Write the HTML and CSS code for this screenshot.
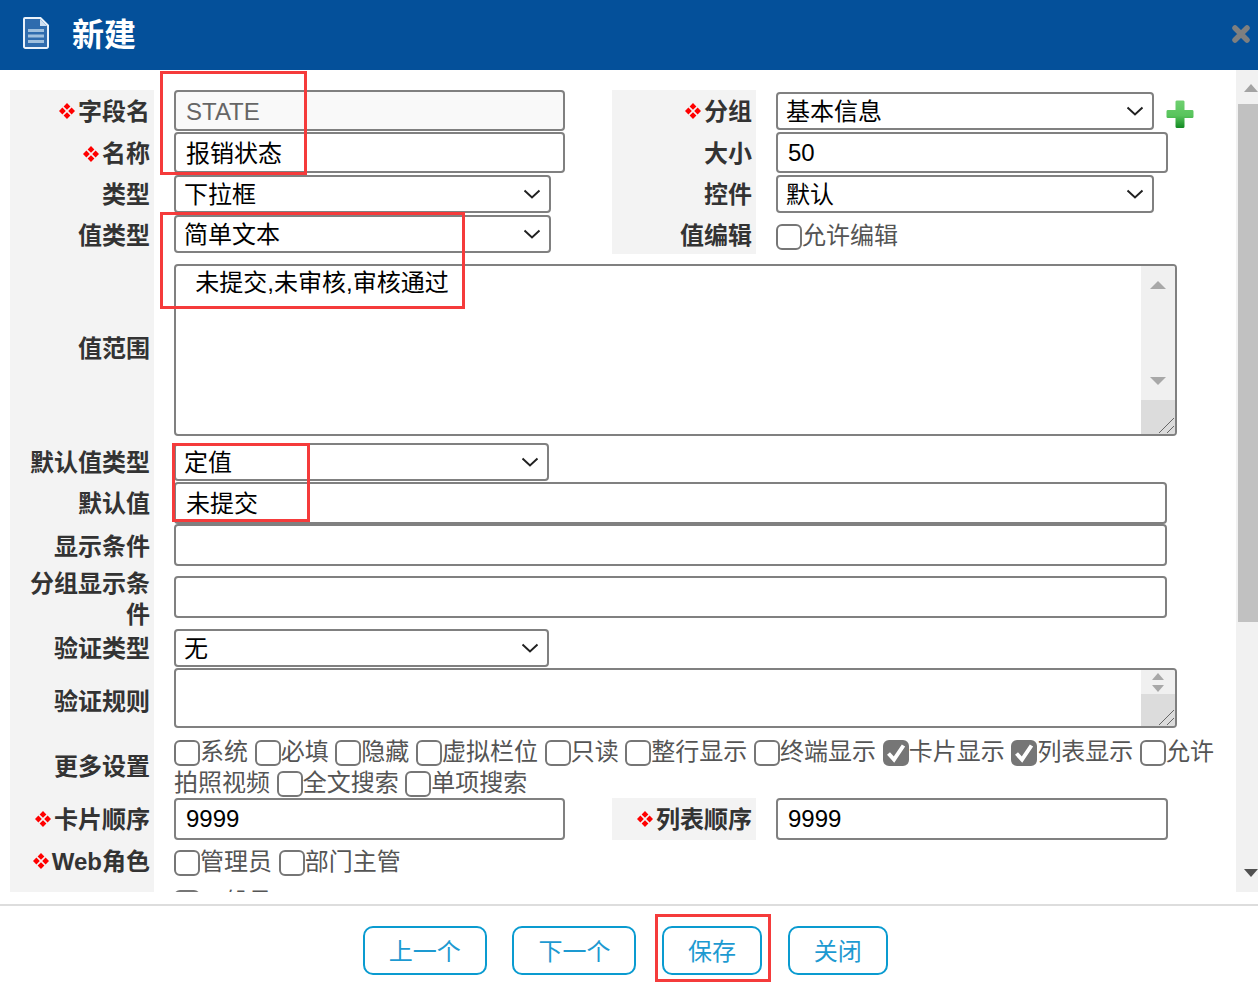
FILE: index.html
```html
<!DOCTYPE html>
<html lang="zh">
<head>
<meta charset="utf-8">
<title>新建</title>
<link rel="stylesheet" href="styles.css">
</head>
<body>
<svg class="defs" aria-hidden="true"><symbol id="dm" viewBox="0 0 16 16"><path d="M8 0l3.400 3.400L8 6.800 4.600 3.400zM8 9.200l3.400 3.400L8 16l-3.400-3.400zM3.400 4.600L6.800 8l-3.400 3.400L0 8zM12.600 4.600L16 8l-3.400 3.400L9.200 8z" fill="#f00"/></symbol></svg>
<div class="dialog">
  <header class="head">
    <svg class="doc-icon" viewBox="0 0 26 32" width="26" height="32"><path d="M2 1h15.500L25 8.500V29.500a1.500 1.500 0 0 1-1.500 1.500H2.500A1.500 1.500 0 0 1 1 29.500V2a1 1 0 0 1 1-1z" fill="#2f6cae" stroke="#eaf2fa" stroke-width="2"/><path d="M17 2l7 7h-7z" fill="#cfe0f0"/><path d="M5 13.500h16M5 19h16M5 24.500h16" stroke="#9fc0de" stroke-width="3"/></svg>
    <h1 class="title">新建</h1>
    <svg class="close-icon" viewBox="0 0 18 18" width="18" height="18"><path d="M3 3l12 12M15 3L3 15" stroke="#7f7f7f" stroke-width="5.500" stroke-linecap="round"/></svg>
  </header>
  <div class="body">
    <form class="form">
      <label class="lab"><svg class="req"><use href="#dm"/></svg>字段名</label>
      <div class="cell"><input class="field w391 readonly" value="STATE" readonly></div>
      <label class="lab"><svg class="req"><use href="#dm"/></svg>分组</label>
      <div class="cell group-cell"><select class="sel w378 mt2"><option>基本信息</option></select>
        <svg class="plus" viewBox="0 0 28 28" width="28" height="28"><defs><linearGradient id="pg" x1="0" y1="0" x2="0" y2="1"><stop offset="0" stop-color="#6fd070"/><stop offset=".55" stop-color="#58c45c"/><stop offset="1" stop-color="#128a22"/></linearGradient></defs><path d="M9.500 1.500a1.500 1.500 0 0 1 1.500-1h6a1.500 1.500 0 0 1 1.500 1V10h8a1.500 1.500 0 0 1 1 1.500v5a1.500 1.500 0 0 1-1 1.500h-8v8.500a1.500 1.500 0 0 1-1.500 1.500h-6a1.500 1.500 0 0 1-1.500-1.500V18h-8a1.500 1.500 0 0 1-1-1.500v-5a1.500 1.500 0 0 1 1-1.500h8z" fill="url(#pg)"/></svg></div>

      <label class="lab"><svg class="req"><use href="#dm"/></svg>名称</label>
      <div class="cell"><input class="field w391 h41 cjk" value="报销状态"></div>
      <label class="lab">大小</label>
      <div class="cell"><input class="field w392 h41" value="50"></div>

      <label class="lab">类型</label>
      <div class="cell"><select class="sel w377"><option>下拉框</option></select></div>
      <label class="lab">控件</label>
      <div class="cell"><select class="sel w378"><option>默认</option></select></div>

      <label class="lab lab-low">值类型</label>
      <div class="cell"><select class="sel w377 mt1"><option>简单文本</option></select></div>
      <label class="lab lab-low">值编辑</label>
      <div class="cell checks pt6"><label><input type="checkbox" class="chk">允许编辑</label></div>

      <label class="lab">值范围</label>
      <div class="cell wide">
        <div class="area area-tall mt10">
          <textarea class="area-text">  未提交,未审核,审核通过</textarea>
          <div class="sb">
            <div class="sb-track"><span class="tri up"></span><span class="tri down"></span></div>
            <div class="sb-corner"><svg viewBox="0 0 16 16" width="16" height="16"><path d="M1 16L16 1M9 16l7-7" stroke="#666" stroke-width="1"/></svg></div>
          </div>
        </div>
      </div>

      <label class="lab">默认值类型</label>
      <div class="cell wide"><select class="sel w375"><option>定值</option></select></div>

      <label class="lab">默认值</label>
      <div class="cell wide"><input class="field w993 cjk" value="未提交"></div>

      <label class="lab">显示条件</label>
      <div class="cell wide"><input class="field w993"></div>

      <label class="lab">分组显示条件</label>
      <div class="cell wide"><input class="field w993 mt8"></div>

      <label class="lab">验证类型</label>
      <div class="cell wide"><select class="sel w375"><option>无</option></select></div>

      <label class="lab">验证规则</label>
      <div class="cell wide">
        <div class="area area-short">
          <textarea class="area-text"></textarea>
          <div class="sb">
            <div class="sb-track small"><span class="tri up small"></span><span class="tri down small"></span></div>
            <div class="sb-corner tall"><svg viewBox="0 0 16 16" width="16" height="16"><path d="M1 16L16 1M9 16l7-7" stroke="#666" stroke-width="1"/></svg></div>
          </div>
        </div>
      </div>

      <label class="lab">更多设置</label>
      <div class="cell wide checks wrap-checks">
        <label><input type="checkbox" class="chk">系统</label>
        <label><input type="checkbox" class="chk">必填</label>
        <label><input type="checkbox" class="chk">隐藏</label>
        <label><input type="checkbox" class="chk">虚拟栏位</label>
        <label><input type="checkbox" class="chk">只读</label>
        <label><input type="checkbox" class="chk">整行显示</label>
        <label><input type="checkbox" class="chk">终端显示</label>
        <label><input type="checkbox" class="chk" checked>卡片显示</label>
        <label><input type="checkbox" class="chk" checked>列表显示</label>
        <label><input type="checkbox" class="chk">允许拍照视频</label>
        <label><input type="checkbox" class="chk">全文搜索</label>
        <label><input type="checkbox" class="chk">单项搜索</label>
      </div>

      <label class="lab"><svg class="req"><use href="#dm"/></svg>卡片顺序</label>
      <div class="cell"><input class="field w391" value="9999"></div>
      <label class="lab"><svg class="req"><use href="#dm"/></svg>列表顺序</label>
      <div class="cell"><input class="field w392" value="9999"></div>

      <label class="lab"><svg class="req"><use href="#dm"/></svg>Web角色</label>
      <div class="cell wide checks pt6">
        <label><input type="checkbox" class="chk">管理员</label>
        <label><input type="checkbox" class="chk">部门主管</label>
      </div>

      <label class="lab">终端角色</label>
      <div class="cell wide checks pt4">
        <label><input type="checkbox" class="chk">一般员工</label>
      </div>
    </form>
    <div class="page-sb">
      <span class="tri up page-up"></span>
      <div class="page-thumb"></div>
      <span class="tri down page-down"></span>
    </div>
  </div>
  <footer class="foot">
    <button type="button" class="btn btn-wide">上一个</button>
    <button type="button" class="btn btn-wide">下一个</button>
    <button type="button" class="btn">保存</button>
    <button type="button" class="btn">关闭</button>
  </footer>
  <div class="mark mark-a"></div>
  <div class="mark mark-b"></div>
  <div class="mark mark-c"></div>
  <div class="mark mark-d"></div>
</div>
</body>
</html>
```
FILE: styles.css
```css
* { box-sizing: border-box; }
html, body { margin: 0; height: 100%; overflow: hidden; background: #fff; }
body, input, select, textarea, button {
  font-family: "Liberation Sans", "Noto Sans CJK SC", sans-serif;
  font-size: 24px;
}
.defs { display: none; }
.dialog { position: relative; width: 1258px; height: 982px; display: flex; flex-direction: column; overflow: hidden; }

.head { flex: none; height: 70px; background: #04509a; display: flex; align-items: center; padding-left: 23px; padding-right: 8px; }
.doc-icon { flex: none; margin-top: -4px; }
.title { margin: 0 0 0 23px; font-size: 32px; line-height: 40px; font-weight: 700; color: #fff; flex: 1; }
.close-icon { flex: none; margin-top: -2px; }

.body { flex: none; height: 822px; display: flex; overflow: hidden; }
.form {
  flex: none; width: 1236px; padding: 20px 0 0 10px;
  display: grid;
  grid-template-columns: 144px 458px 144px 1fr;
  grid-template-rows: 42px 43px 39px 40px 189px 39px 42px 44px 61px 39px 67px 63px 42px 42px 44px;
  overflow: hidden;
}
.lab {
  display: flex; align-items: center; justify-content: flex-end; flex-wrap: wrap;
  align-content: center;
  padding-right: 4px; background: #f3f3f3; color: #333; font-weight: 700; line-height: 31px; text-align: right;
}
.lab-low { padding-top: 2px; }
.req { flex: none; width: 16px; height: 16px; margin-right: 3px; }
.cell { padding-left: 20px; min-width: 0; }
.wide { grid-column: 2 / -1; }
.group-cell { display: flex; align-items: flex-start; }
.pt4 { padding-top: 4px; }
.pt6 { padding-top: 6px; }

.field {
  display: block; height: 42px; padding: 0 10px; margin: 0; border: 2px solid #808080; border-radius: 4px; background: #fff; color: #000; outline: none;
}
.h41 { height: 41px; }
.cjk { padding-bottom: 3px; }
.readonly { background: #f9f9f9; color: #666; height: 41px; padding-top: 2px; }
.sel {
  display: block; height: 38px; margin: 0; border: 2px solid #808080; border-radius: 4px; color: #000; padding: 0 40px 0 8px;
  appearance: none; -webkit-appearance: none;
  background: #fff url("data:image/svg+xml,%3Csvg xmlns='http://www.w3.org/2000/svg' width='18' height='10'%3E%3Cpath d='M1.500 1.500L9 8.500l7.500-7' fill='none' stroke='%23222' stroke-width='2'/%3E%3C/svg%3E") no-repeat right 8px center;
}
.w375 { width: 375px; } .w377 { width: 377px; } .w378 { width: 378px; }
.w391 { width: 391px; } .w392 { width: 392px; } .w993 { width: 993px; }
.mt1 { margin-top: 1px; } .mt2 { margin-top: 2px; } .mt8 { margin-top: 8px; } .mt10 { margin-top: 10px; }
.plus { flex: none; margin: 10px 0 0 12px; }

.checks { color: #555; line-height: 31px; }
.wrap-checks { padding-top: 1px; padding-right: 14px; }
.chk {
  appearance: none; -webkit-appearance: none;
  width: 26px; height: 26px; margin: 0; vertical-align: -6px; border: 2px solid #767676; border-radius: 6px; background: #fff;
}
.chk:checked {
  background: #767676 url("data:image/svg+xml,%3Csvg xmlns='http://www.w3.org/2000/svg' width='22' height='22'%3E%3Cpath d='M3.500 11.500l5.500 6L18.500 3.500' fill='none' stroke='%23fff' stroke-width='4'/%3E%3C/svg%3E") no-repeat center;
}

.area { width: 1003px; display: flex; border: 2px solid #808080; border-radius: 4px; background: #fff; overflow: hidden; }
.area-tall { height: 172px; }
.area-short { height: 60px; }
.area-text { flex: 1; min-width: 0; border: 0; padding: 1px 6px; margin: 0; resize: none; outline: none; line-height: 31px; color: #000; background: transparent; font-size: 24px; }
.sb { flex: none; width: 34px; display: flex; flex-direction: column; }
.sb-track { flex: 1; background: #f0f0f0; display: flex; flex-direction: column; align-items: center; justify-content: space-between; padding: 15px 0 15px; }
.sb-track.small { padding: 3px 0 2px; flex: none; height: 24px; gap: 2px; }
.sb-corner { flex: none; height: 34px; background: #dcdcdc; display: flex; align-items: flex-end; justify-content: flex-end; padding: 0 1px 1px 0; }
.sb-corner.tall { height: 32px; flex: 1; }

.tri { display: block; width: 0; height: 0; border-left: 8px solid transparent; border-right: 8px solid transparent; }
.tri.up { border-bottom: 8px solid #a8a8a8; }
.tri.down { border-top: 8px solid #a8a8a8; }
.tri.small { border-left-width: 6px; border-right-width: 6px; }
.tri.up.small { border-bottom-width: 7px; }
.tri.down.small { border-top-width: 7px; }

.page-sb { flex: none; width: 22px; background: #f1f1f1; position: relative; display: flex; flex-direction: column; align-items: stretch; }
.page-thumb { height: 518px; margin: 12px 0 0 2px; background: #c1c1c1; }
.tri.page-up { align-self: flex-end; margin: 14px 0 0 0; border-left-width: 7px; border-right-width: 7px; border-bottom-color: #a3a3a3; }
.tri.page-down { align-self: flex-end; margin: auto 0 15px 0; border-left-width: 7px; border-right-width: 7px; border-top-color: #505050; }

.foot { flex: 1; margin-top: 12px; border-top: 2px solid #ddd; display: flex; align-items: flex-start; justify-content: center; gap: 25.7px; padding: 20px 7.5px 0 0; }
.btn { width: 100px; height: 49px; padding: 0 0 2px; background: #fff; border: 2px solid #0a9bd0; border-radius: 10px; color: #1d9ad1; }
.btn-wide { width: 124px; }

.mark { position: absolute; border: 3px solid #f53b3b; pointer-events: none; }
.mark-a { left: 160px; top: 71px; width: 147px; height: 104px; }
.mark-b { left: 160px; top: 212px; width: 305px; height: 97px; }
.mark-c { left: 172px; top: 443px; width: 138px; height: 79px; }
.mark-d { left: 655px; top: 914px; width: 116px; height: 68px; }
```
